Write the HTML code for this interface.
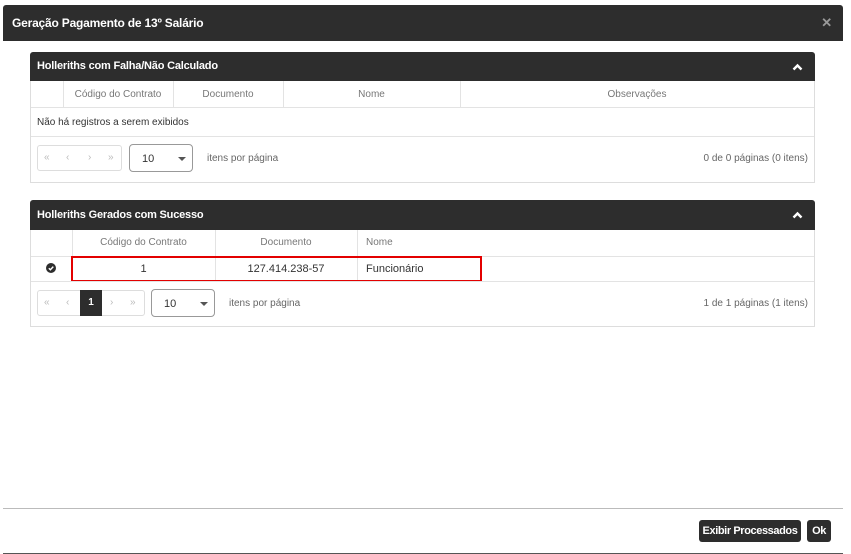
<!DOCTYPE html><html><head><style>
body{margin:0;width:851px;height:554px;background:#fff;font-family:"Liberation Sans",Arial,sans-serif;position:relative;overflow:hidden;font-size:11px;color:#333}
.a{position:absolute}
.top{left:3px;top:5px;width:840px;height:36px;background:#2d2d2d;color:#fff;font-weight:bold;font-size:12px;line-height:36px;border-radius:3px 3px 0 0;letter-spacing:-0.2px}
.ph{background:#2d2d2d;color:#fff;font-weight:bold;font-size:11px;border-radius:3px 3px 0 0;letter-spacing:-0.2px}
.box{border:1px solid #ddd;border-top:none;box-sizing:border-box}
.th{color:#777;font-size:10px;text-align:center}
.vl{width:1px;background:#e3e3e3}
.hl{height:1px;background:#e3e3e3}
.pg{border:1px solid #ddd;border-radius:3px;height:26px;box-sizing:border-box;color:#bbb;font-size:10px}
.sel{border:1px solid #999;border-radius:4px;height:28px;box-sizing:border-box;font-size:11px;color:#333}
.car{width:0;height:0;border-left:4px solid transparent;border-right:4px solid transparent;border-top:4px solid #555}
.btn{background:#2d2d2d;color:#fff;font-weight:bold;font-size:11px;border-radius:3px;text-align:center;line-height:22px;white-space:nowrap;letter-spacing:-0.4px}
</style></head><body>
<div class="a top"><span style="padding-left:9px">Geração Pagamento de 13º Salário</span><span class="a" style="right:11px;top:0;color:#999;font-size:13px">✕</span></div>

<div class="a ph" style="left:30px;top:52px;width:785px;height:29px;line-height:29px"><span style="padding-left:7px">Holleriths com Falha/Não Calculado</span>
<svg class="a" style="right:12px;top:11px" width="11" height="8" viewBox="0 0 11 8"><path d="M1.5 6.5L5.5 2.5L9.5 6.5" stroke="#fff" stroke-width="2.4" fill="none"/></svg></div>
<div class="a box" style="left:30px;top:81px;width:785px;height:102px"></div>
<div class="a vl" style="left:63px;top:81px;height:27px"></div>
<div class="a vl" style="left:173px;top:81px;height:27px"></div>
<div class="a vl" style="left:283px;top:81px;height:27px"></div>
<div class="a vl" style="left:460px;top:81px;height:27px"></div>
<div class="a th" style="left:63px;top:89px;width:110px">Código do Contrato</div>
<div class="a th" style="left:173px;top:89px;width:110px">Documento</div>
<div class="a th" style="left:283px;top:89px;width:177px">Nome</div>
<div class="a th" style="left:460px;top:89px;width:354px">Observações</div>
<div class="a hl" style="left:31px;top:107px;width:783px"></div>
<div class="a" style="left:37px;top:117px;font-size:10px;color:#333">Não há registros a serem exibidos</div>
<div class="a hl" style="left:31px;top:136px;width:783px"></div>
<div class="a pg" style="left:37px;top:145px;width:85px"><span class="a" style="left:6px;top:6px">«</span><span class="a" style="left:28px;top:6px">‹</span><span class="a" style="left:50px;top:6px">›</span><span class="a" style="left:70px;top:6px">»</span></div>
<div class="a sel" style="left:129px;top:144px;width:64px"><span class="a" style="left:12px;top:8px">10</span><div class="a car" style="left:48px;top:12px"></div></div>
<div class="a" style="left:207px;top:153px;color:#666;font-size:10px">itens por página</div>
<div class="a" style="right:43px;top:153px;color:#666;font-size:10px">0 de 0 páginas (0 itens)</div>

<div class="a ph" style="left:30px;top:200px;width:785px;height:30px;line-height:30px"><span style="padding-left:7px">Holleriths Gerados com Sucesso</span>
<svg class="a" style="right:12px;top:11px" width="11" height="8" viewBox="0 0 11 8"><path d="M1.5 6.5L5.5 2.5L9.5 6.5" stroke="#fff" stroke-width="2.4" fill="none"/></svg></div>
<div class="a box" style="left:30px;top:230px;width:785px;height:97px"></div>
<div class="a vl" style="left:72px;top:230px;height:52px"></div>
<div class="a vl" style="left:215px;top:230px;height:52px"></div>
<div class="a vl" style="left:357px;top:230px;height:52px"></div>
<div class="a th" style="left:72px;top:237px;width:143px">Código do Contrato</div>
<div class="a th" style="left:215px;top:237px;width:142px">Documento</div>
<div class="a th" style="left:366px;top:237px;text-align:left">Nome</div>
<div class="a hl" style="left:31px;top:256px;width:783px"></div>
<div class="a" style="left:46px;top:263px;width:10px;height:10px;border-radius:50%;background:#2d2d2d"></div>
<svg class="a" style="left:46px;top:263px" width="10" height="10"><path d="M2.8 5.2L4.4 6.7L7.3 3.6" stroke="#fff" stroke-width="1.4" fill="none"/></svg>
<div class="a" style="left:72px;top:263px;width:143px;text-align:center">1</div>
<div class="a" style="left:215px;top:263px;width:142px;text-align:center">127.414.238-57</div>
<div class="a" style="left:366px;top:263px">Funcionário</div>
<div class="a" style="left:71px;top:256px;width:411px;height:26px;border:2px solid #e30000;box-sizing:border-box"></div>
<div class="a hl" style="left:31px;top:281px;width:783px"></div>
<div class="a pg" style="left:37px;top:290px;width:108px"><span class="a" style="left:6px;top:6px">«</span><span class="a" style="left:28px;top:6px">‹</span><span class="a" style="left:42px;top:-1px;width:22px;height:26px;background:#2d2d2d;color:#fff;font-weight:bold;text-align:center;line-height:26px">1</span><span class="a" style="left:72px;top:6px">›</span><span class="a" style="left:92px;top:6px">»</span></div>
<div class="a sel" style="left:151px;top:289px;width:64px"><span class="a" style="left:12px;top:8px">10</span><div class="a car" style="left:48px;top:12px"></div></div>
<div class="a" style="left:229px;top:298px;color:#666;font-size:10px">itens por página</div>
<div class="a" style="right:43px;top:298px;color:#666;font-size:10px">1 de 1 páginas (1 itens)</div>

<div class="a" style="left:3px;top:508px;width:840px;height:1px;background:#bbb"></div>
<div class="a btn" style="left:699px;top:520px;width:102px;height:22px">Exibir Processados</div>
<div class="a btn" style="left:807px;top:520px;width:24px;height:22px">Ok</div>
<div class="a" style="left:3px;top:553px;width:840px;height:1px;background:#555"></div>
</body></html>
